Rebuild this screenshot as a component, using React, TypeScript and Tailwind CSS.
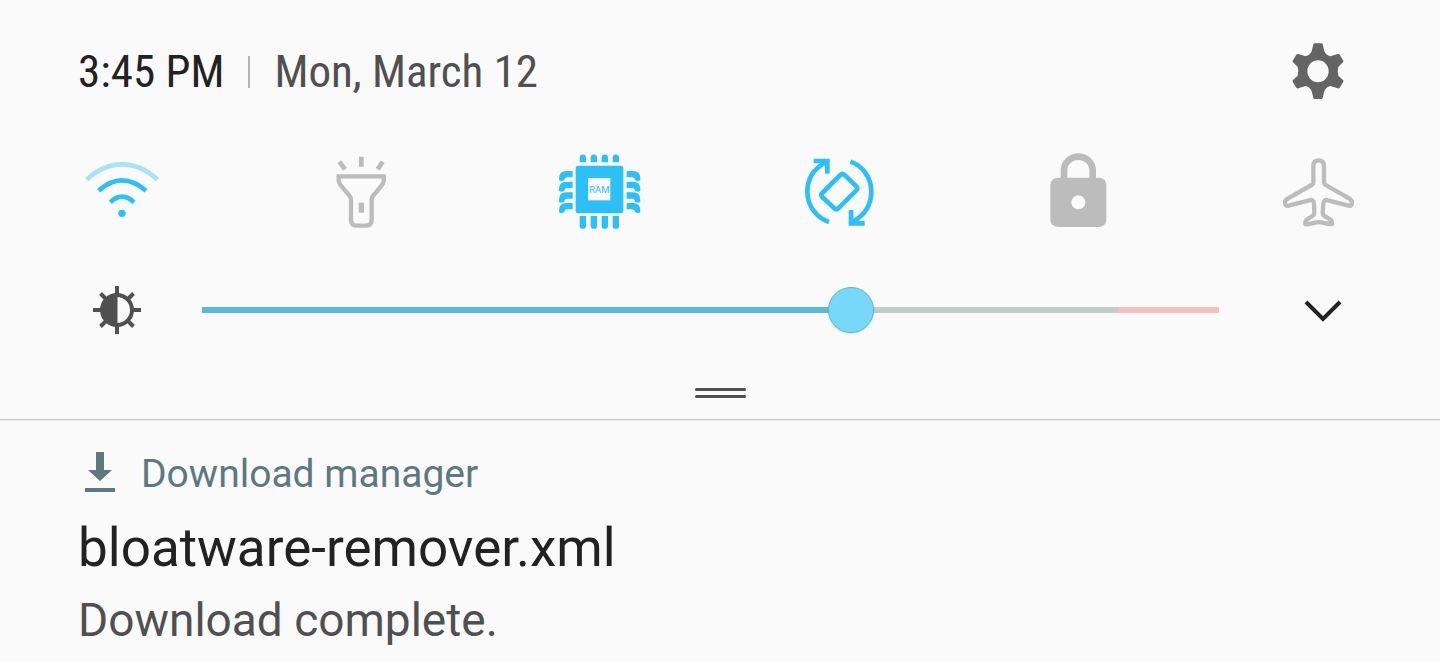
import { useState } from 'react'
import type { ReactNode } from 'react'

interface QuickToggle {
  id: string
  label: string
  on: boolean
  viewBox: string
  art: ReactNode
}

const toggles: QuickToggle[] = [
  {
    id: 'wifi',
    label: 'Wi-Fi',
    on: true,
    viewBox: '24 6 264 264',
    art: (
      <g fill="none" stroke="currentColor" strokeWidth="14">
        <path d="M50 104Q98 58 156 58T262 104" className="opacity-40" />
        <path d="M86 137Q120 106 156 106T228 137" />
        <path d="M121 172Q138 155 156 155T192 172" />
        <circle cx="156" cy="205" r="11" fill="currentColor" stroke="none" />
      </g>
    ),
  },
  {
    id: 'torch',
    label: 'Flashlight',
    on: false,
    viewBox: '-10 4 264 264',
    art: (
      <g fill="none" stroke="currentColor" strokeWidth="13">
        <path d="M55 92H190V106Q188 116 182 122L157 152Q154 156 154 162V222Q154 240 136 240H110Q92 240 92 222V162Q92 156 89 152L64 122Q57 114 55 106Z" />
        <path d="M123 33V63M57 48L74 71M187 48L172 71" strokeWidth="14" />
        <path d="M123 171V201" strokeWidth="16" />
      </g>
    ),
  },
  {
    id: 'ram',
    label: 'RAM',
    on: true,
    viewBox: '34 6 264 264',
    art: (
      <>
        <g fill="currentColor">
          <rect x="93" y="62" width="143" height="143" rx="8" />
          {[105, 138, 171, 204].map((x) => (
            <g key={x}>
              <path d={`M${x} 52V38a9.500 9.500 0 0 1 19 0V52Z`} />
              <path d={`M${x} 213V242a9.500 9.500 0 0 0 19 0V213Z`} />
            </g>
          ))}
          {[78, 110, 142, 174].map((y) => (
            <g key={y}>
              <path d={`M84 ${y}H66Q43 ${y} 43 ${y + 22}V${y + 28}Q50 ${y + 33} 59 ${y + 28}Q60 ${y + 19} 68 ${y + 19}H84Z`} />
              <path d={`M246 ${y}H264Q287 ${y} 287 ${y + 22}V${y + 28}Q280 ${y + 33} 271 ${y + 28}Q270 ${y + 19} 262 ${y + 19}H246Z`} />
            </g>
          ))}
        </g>
        <rect x="130" y="99" width="67" height="67" fill="#fafafa" />
        <text x="164" y="143" textAnchor="middle" fill="currentColor" fontSize="28">RAM</text>
      </>
    ),
  },
  {
    id: 'rotate',
    label: 'Auto rotate',
    on: true,
    viewBox: '17 6 264 264',
    art: (
      <g fill="none" stroke="currentColor" strokeWidth="14">
        <path d="M116 231C78 218 51 182 51 140C51 104 70 72 106 52" />
        <path d="M180 50C218 63 243 98 243 140C243 178 222 210 188 230" />
        <path d="M70 48H111V86M182 195V235H223" />
        <path d="M150 90Q156 84 163 90L198 124Q204 130 198 136L144 190Q138 196 132 190L96 156Q90 150 96 144Z" />
      </g>
    ),
  },
  {
    id: 'lock',
    label: 'Screen lock',
    on: false,
    viewBox: '-1 6 264 264',
    art: (
      <>
        <path d="M86 104V76a43 41 0 0 1 86 0V104" fill="none" stroke="currentColor" strokeWidth="20" />
        <rect x="45" y="98" width="168" height="148" rx="22" fill="currentColor" />
        <circle cx="129" cy="172" r="21" fill="#fafafa" />
      </>
    ),
  },
  {
    id: 'airplane',
    label: 'Airplane mode',
    on: false,
    viewBox: '12 6 264 264',
    art: (
      <path
        d="M130 64Q130 46 146 46Q162 46 162 64V111Q162 117 167 120L237 160Q246 165 246 174Q246 184 236 182L174 166Q161 162 160 176L158 204Q158 209 162 212L180 223Q187 228 186 237H180L152 232Q146 231 140 232L112 238L106 237Q105 228 112 223L128 212Q133 209 133 204L132 176Q131 162 118 166L56 182Q45 184 45 174Q45 165 54 160L125 120Q130 117 130 111Z"
        fill="none"
        stroke="currentColor"
        strokeWidth="13"
        strokeLinejoin="round"
      />
    ),
  },
]

function GearIcon() {
  return (
    <svg viewBox="12 29 264 192" className="w-full h-full" aria-hidden="true">
      <path
        fillRule="evenodd"
        fill="currentColor"
        d="M134 39H154Q157 39 158 42L163 63Q168 75 181 78L203 71Q207 70 209 73L220 91Q221 94 219 96L205 109Q201 122 205 136L219 149Q221 151 220 154L209 172Q207 175 203 174L181 167Q168 170 163 182L158 203Q157 206 154 206H134Q131 206 130 203L125 182Q120 170 107 167L85 174Q81 175 79 172L68 154Q67 151 69 149L83 136Q87 122 83 109L69 96Q67 94 68 91L79 73Q81 70 85 71L107 78Q120 75 125 63L130 42Q131 39 134 39ZM144 90A32 33 0 1 0 144 156A32 33 0 1 0 144 90Z"
      />
    </svg>
  )
}

function BrightnessIcon() {
  return (
    <svg viewBox="0 0 48 48" className="w-12 h-12" aria-hidden="true">
      <circle cx="24" cy="24" r="15" fill="none" stroke="currentColor" strokeWidth="4" />
      <path d="M24.500 8V40A16 16 0 0 1 24.500 8Z" fill="currentColor" />
      <path
        d="M24 0V8M24 40V48M0 24H8M40 24H48M7.500 7.500L13 13M35 35L40.500 40.500M7.500 40.500L13 35M35 13L40.500 7.500"
        stroke="currentColor"
        strokeWidth="4"
      />
    </svg>
  )
}

export default function App() {
  const [active, setActive] = useState(toggles.filter((t) => t.on).map((t) => t.id))
  const [level, setLevel] = useState(645)

  const toggle = (id: string) =>
    setActive((ids) => (ids.includes(id) ? ids.filter((i) => i !== id) : [...ids, id]))

  const fill = level / 10
  const warn = Math.max(fill, 90.2)
  const track = `linear-gradient(to right, #5cb8d8 ${fill}%, #c3cbcb ${fill}%, #c3cbcb ${warn}%, #f3c0c0 ${warn}%)`

  return (
    <div className="min-h-screen bg-[#fafafa] font-['Roboto',sans-serif]">
      <section className="pt-10 pb-[21px] border-b border-[#c4c4c4] shadow-xs">
        <header className="flex items-center justify-between px-[78px]">
          <div className="flex items-center font-['Roboto_Condensed','Roboto',sans-serif] text-[45px] leading-[64px] whitespace-nowrap">
            <time className="text-[#222222]">3:45 PM</time>
            <span className="w-[2px] h-8 mx-6 bg-[#b4b4b4]" />
            <span className="text-[#505050]">Mon, March 12</span>
          </div>
          <button type="button" aria-label="Settings" className="w-[88px] h-16 text-[#646464]">
            <GearIcon />
          </button>
        </header>

        <div className="flex justify-between px-[78px] mt-[43px]">
          {toggles.map((t) => (
            <button
              key={t.id}
              type="button"
              aria-label={t.label}
              aria-pressed={active.includes(t.id)}
              onClick={() => toggle(t.id)}
              className={`w-[88px] h-[88px] ${active.includes(t.id) ? 'text-[#2cc0f7]' : 'text-[#bcbcbc]'}`}
            >
              <svg viewBox={t.viewBox} className="w-full h-full" aria-hidden="true">
                {t.art}
              </svg>
            </button>
          ))}
        </div>

        <div className="flex items-center px-[78px] mt-[43px] h-16">
          <label htmlFor="brightness" aria-label="Brightness" className="flex justify-center w-[78px] text-[#505050]">
            <BrightnessIcon />
          </label>
          <div className="flex items-center flex-1 ml-[46px] mr-[65px]">
            <input
              id="brightness"
              type="range"
              min={0}
              max={1000}
              value={level}
              onChange={(e) => setLevel(Number(e.target.value))}
              style={{ backgroundImage: track }}
              className="w-full h-[6px] appearance-none outline-none [&::-webkit-slider-thumb]:appearance-none [&::-webkit-slider-thumb]:w-[46px] [&::-webkit-slider-thumb]:h-[46px] [&::-webkit-slider-thumb]:rounded-full [&::-webkit-slider-thumb]:bg-[#78d8fa] [&::-webkit-slider-thumb]:border [&::-webkit-slider-thumb]:border-[#60b4cf] [&::-webkit-slider-thumb]:shadow-sm"
            />
          </div>
          <button type="button" aria-label="Expand" className="flex justify-center w-[78px] text-[#222222]">
            <svg viewBox="0 0 38 24" className="w-[38px] h-6" aria-hidden="true">
              <path d="M2 4L19 21L36 4" fill="none" stroke="currentColor" strokeWidth="4" />
            </svg>
          </button>
        </div>

        <button type="button" aria-label="Drag handle" className="flex flex-col gap-1 w-[51px] mt-[46px] mx-auto">
          <span className="w-full h-[3px] rounded-sm bg-[#505050]" />
          <span className="w-full h-[3px] rounded-sm bg-[#505050]" />
        </button>
      </section>

      <article className="px-[78px] pt-[30px]">
        <div className="flex items-center pl-[7px] gap-[26px] text-[#5e7880]">
          <svg viewBox="0 0 30 44" className="w-[30px] h-11" aria-hidden="true">
            <path d="M11 0H19V18H27L15 29L3 18H11ZM0 36H30V40H0Z" fill="currentColor" />
          </svg>
          <span className="text-[39px] leading-[48px]">Download manager</span>
        </div>
        <h1 className="mt-[18px] text-[53px] leading-[64px] text-[#222222]">bloatware-remover.xml</h1>
        <p className="mt-3 text-[46px] leading-[56px] text-[#505050]">Download complete.</p>
      </article>
    </div>
  )
}
